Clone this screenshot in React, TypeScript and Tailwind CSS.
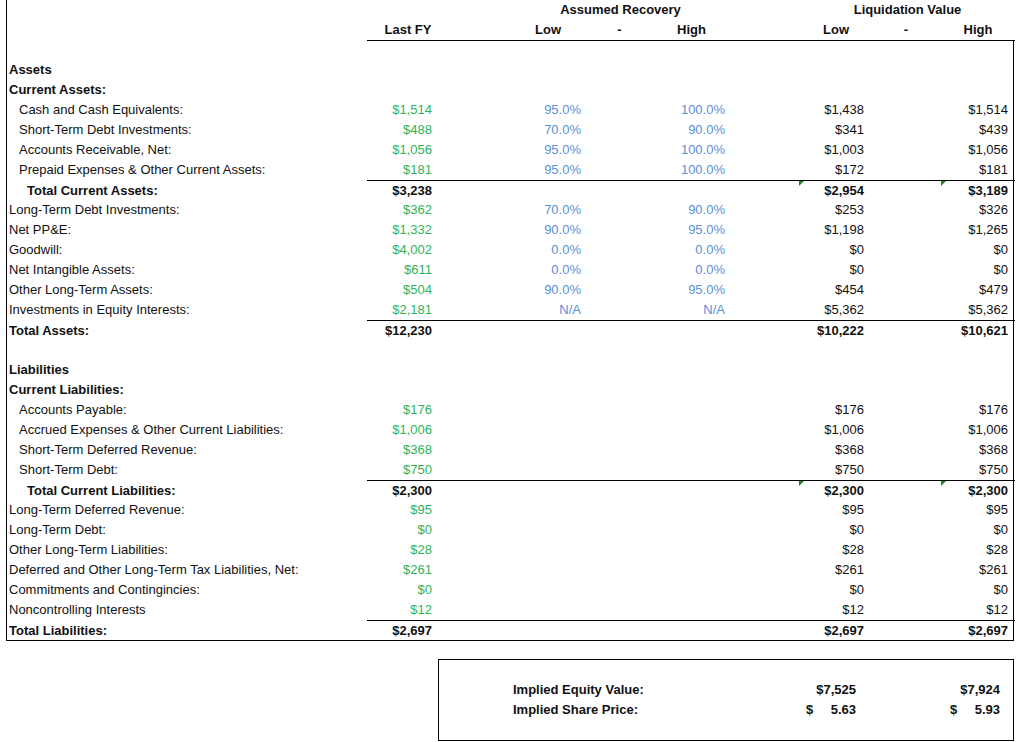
import React from "react";

type Row = {
  label?: string;
  kind?: "head" | "item" | "total" | "plain" | "blank";
  fy?: string;
  lo?: string;
  hi?: string;
  llo?: string;
  lhi?: string;
  line?: boolean;
  tri?: boolean;
};

const rows: Row[] = [
  { kind: "blank" },
  { label: "Assets", kind: "head" },
  { label: "Current Assets:", kind: "head" },
  { label: "Cash and Cash Equivalents:", kind: "item", fy: "$1,514", lo: "95.0%", hi: "100.0%", llo: "$1,438", lhi: "$1,514" },
  { label: "Short-Term Debt Investments:", kind: "item", fy: "$488", lo: "70.0%", hi: "90.0%", llo: "$341", lhi: "$439" },
  { label: "Accounts Receivable, Net:", kind: "item", fy: "$1,056", lo: "95.0%", hi: "100.0%", llo: "$1,003", lhi: "$1,056" },
  { label: "Prepaid Expenses & Other Current Assets:", kind: "item", fy: "$181", lo: "95.0%", hi: "100.0%", llo: "$172", lhi: "$181" },
  { label: "Total Current Assets:", kind: "total", fy: "$3,238", llo: "$2,954", lhi: "$3,189", line: true, tri: true },
  { label: "Long-Term Debt Investments:", kind: "plain", fy: "$362", lo: "70.0%", hi: "90.0%", llo: "$253", lhi: "$326" },
  { label: "Net PP&E:", kind: "plain", fy: "$1,332", lo: "90.0%", hi: "95.0%", llo: "$1,198", lhi: "$1,265" },
  { label: "Goodwill:", kind: "plain", fy: "$4,002", lo: "0.0%", hi: "0.0%", llo: "$0", lhi: "$0" },
  { label: "Net Intangible Assets:", kind: "plain", fy: "$611", lo: "0.0%", hi: "0.0%", llo: "$0", lhi: "$0" },
  { label: "Other Long-Term Assets:", kind: "plain", fy: "$504", lo: "90.0%", hi: "95.0%", llo: "$454", lhi: "$479" },
  { label: "Investments in Equity Interests:", kind: "plain", fy: "$2,181", lo: "N/A", hi: "N/A", llo: "$5,362", lhi: "$5,362" },
  { label: "Total Assets:", kind: "head", fy: "$12,230", llo: "$10,222", lhi: "$10,621", line: true },
  { kind: "blank" },
  { label: "Liabilities", kind: "head" },
  { label: "Current Liabilities:", kind: "head" },
  { label: "Accounts Payable:", kind: "item", fy: "$176", llo: "$176", lhi: "$176" },
  { label: "Accrued Expenses & Other Current Liabilities:", kind: "item", fy: "$1,006", llo: "$1,006", lhi: "$1,006" },
  { label: "Short-Term Deferred Revenue:", kind: "item", fy: "$368", llo: "$368", lhi: "$368" },
  { label: "Short-Term Debt:", kind: "item", fy: "$750", llo: "$750", lhi: "$750" },
  { label: "Total Current Liabilities:", kind: "total", fy: "$2,300", llo: "$2,300", lhi: "$2,300", line: true, tri: true },
  { label: "Long-Term Deferred Revenue:", kind: "plain", fy: "$95", llo: "$95", lhi: "$95" },
  { label: "Long-Term Debt:", kind: "plain", fy: "$0", llo: "$0", lhi: "$0" },
  { label: "Other Long-Term Liabilities:", kind: "plain", fy: "$28", llo: "$28", lhi: "$28" },
  { label: "Deferred and Other Long-Term Tax Liabilities, Net:", kind: "plain", fy: "$261", llo: "$261", lhi: "$261" },
  { label: "Commitments and Contingincies:", kind: "plain", fy: "$0", llo: "$0", lhi: "$0" },
  { label: "Noncontrolling Interests", kind: "plain", fy: "$12", llo: "$12", lhi: "$12" },
  { label: "Total Liabilities:", kind: "head", fy: "$2,697", llo: "$2,697", lhi: "$2,697", line: true },
];

const cols = "grid grid-cols-[360px_72px_149px_63px_81px_139px_70px_74px]";
const green = "text-[#2fb35a]";
const blue = "text-[#5b8fd6]";

function Tri() {
  return <span className="absolute left-0 top-0 w-0 h-0 border-t-[5px] border-t-[#1a8a1a] border-r-[5px] border-r-transparent" />;
}

export default function App() {
  return (
    <div className="w-[1016px] h-[742px] bg-white text-[13px] text-[#111] overflow-hidden" style={{ fontFamily: '"Liberation Sans", Arial, sans-serif' }}>
      <div className="pl-[6px]">
        <div className="border-l border-black w-[1008px]">
          <div className={`${cols} h-[20px] items-center font-bold`}>
            <div />
            <div />
            <div className="col-span-3 text-center pl-[70px]">Assumed Recovery</div>
            <div className="col-span-3 text-center pl-[68px]">Liquidation Value</div>
          </div>
          <div className={`${cols} h-[20px] items-center font-bold`}>
            <div />
            <div className="border-b border-black h-full flex items-center justify-center col-span-7 !grid grid-cols-[72px_149px_63px_81px_139px_70px_74px]">
              <div className="text-center pl-[10px]">Last FY</div>
              <div className="pl-[96px]">Low</div>
              <div className="text-center">-</div>
              <div className="text-center">High</div>
              <div className="pl-[91px]">Low</div>
              <div className="text-center">-</div>
              <div className="text-center">High</div>
            </div>
          </div>
          <div className="border-r border-b border-black">
            {rows.map((r, i) => {
              if (r.kind === "blank") return <div key={i} className="h-[20px]" />;
              const bold = r.kind === "head" || r.kind === "total";
              const indent = r.kind === "item" ? "pl-[12px]" : r.kind === "total" ? "pl-[20px]" : "pl-[2px]";
              const fyCol = bold ? "" : green;
              return (
                <div key={i} className={`${cols} h-[20px] items-center ${bold ? "font-bold" : ""}`}>
                  <div className={`${indent} whitespace-nowrap`}>{r.label}</div>
                  <div className={`col-span-7 h-full grid grid-cols-[72px_149px_63px_81px_139px_70px_74px] items-center ${r.line ? "border-t border-black" : ""}`}>
                    <div className={`text-right pr-[7px] ${fyCol}`}>{r.fy}</div>
                    <div className={`text-right pr-[7px] ${blue}`}>{r.lo}</div>
                    <div />
                    <div className={`text-right pr-[7px] ${blue}`}>{r.hi}</div>
                    <div className="relative h-full flex items-center justify-end pr-[7px]">
                      {r.tri && <span className="absolute left-[67px] top-0 w-0 h-0 border-t-[5px] border-t-[#1a8a1a] border-r-[5px] border-r-transparent" />}
                      {r.llo}
                    </div>
                    <div />
                    <div className="relative h-full flex items-center justify-end pr-[7px]">
                      {r.tri && <Tri />}
                      {r.lhi}
                    </div>
                  </div>
                </div>
              );
            })}
          </div>
        </div>
      </div>
      <div className="ml-[438px] mt-[18px] w-[576px] h-[82px] border border-black flex flex-col justify-center font-bold">
        <div className="grid grid-cols-[280px_144px_144px] h-[20px] items-center">
          <div className="pl-[74px]">Implied Equity Value:</div>
          <div className="text-right pr-[7px]">$7,525</div>
          <div className="text-right pr-[7px]">$7,924</div>
        </div>
        <div className="grid grid-cols-[280px_144px_144px] h-[20px] items-center">
          <div className="pl-[74px]">Implied Share Price:</div>
          <div className="flex justify-between pl-[87px] pr-[7px]"><span>$</span><span>5.63</span></div>
          <div className="flex justify-between pl-[87px] pr-[7px]"><span>$</span><span>5.93</span></div>
        </div>
      </div>
    </div>
  );
}
